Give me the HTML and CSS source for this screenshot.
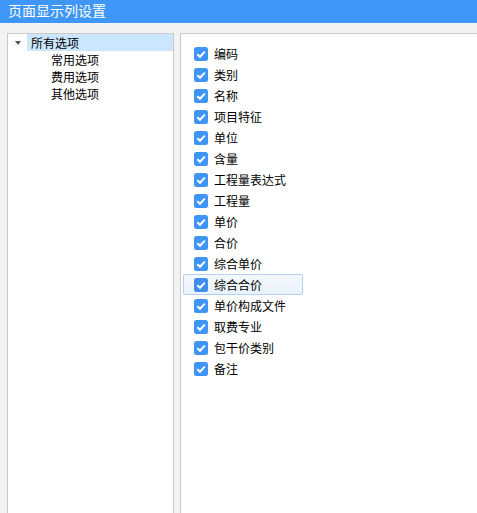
FILE: index.html
```html
<!DOCTYPE html>
<html lang="zh">
<head>
<meta charset="utf-8">
<title>页面显示列设置</title>
<link rel="stylesheet" href="styles.css">
</head>
<body>
<div class="titlebar">页面显示列设置</div>
<div class="content">
  <div class="tree">
    <div class="node root selected"><span class="caret"></span><span class="label">所有选项</span></div>
    <div class="node child"><span class="label">常用选项</span></div>
    <div class="node child"><span class="label">费用选项</span></div>
    <div class="node child"><span class="label">其他选项</span></div>
  </div>
  <div class="list">
    <div class="row"><span class="cb"><svg viewBox="0 0 14 14" width="14" height="14"><rect width="14" height="14" rx="2.5" fill="#3f95f5"/><polyline points="3.3,7.3 6,9.8 10.8,4.6" fill="none" stroke="#fff" stroke-width="2"/></svg></span>编码</div>
    <div class="row"><span class="cb"><svg viewBox="0 0 14 14" width="14" height="14"><rect width="14" height="14" rx="2.5" fill="#3f95f5"/><polyline points="3.3,7.3 6,9.8 10.8,4.6" fill="none" stroke="#fff" stroke-width="2"/></svg></span>类别</div>
    <div class="row"><span class="cb"><svg viewBox="0 0 14 14" width="14" height="14"><rect width="14" height="14" rx="2.5" fill="#3f95f5"/><polyline points="3.3,7.3 6,9.8 10.8,4.6" fill="none" stroke="#fff" stroke-width="2"/></svg></span>名称</div>
    <div class="row"><span class="cb"><svg viewBox="0 0 14 14" width="14" height="14"><rect width="14" height="14" rx="2.5" fill="#3f95f5"/><polyline points="3.3,7.3 6,9.8 10.8,4.6" fill="none" stroke="#fff" stroke-width="2"/></svg></span>项目特征</div>
    <div class="row"><span class="cb"><svg viewBox="0 0 14 14" width="14" height="14"><rect width="14" height="14" rx="2.5" fill="#3f95f5"/><polyline points="3.3,7.3 6,9.8 10.8,4.6" fill="none" stroke="#fff" stroke-width="2"/></svg></span>单位</div>
    <div class="row"><span class="cb"><svg viewBox="0 0 14 14" width="14" height="14"><rect width="14" height="14" rx="2.5" fill="#3f95f5"/><polyline points="3.3,7.3 6,9.8 10.8,4.6" fill="none" stroke="#fff" stroke-width="2"/></svg></span>含量</div>
    <div class="row"><span class="cb"><svg viewBox="0 0 14 14" width="14" height="14"><rect width="14" height="14" rx="2.5" fill="#3f95f5"/><polyline points="3.3,7.3 6,9.8 10.8,4.6" fill="none" stroke="#fff" stroke-width="2"/></svg></span>工程量表达式</div>
    <div class="row"><span class="cb"><svg viewBox="0 0 14 14" width="14" height="14"><rect width="14" height="14" rx="2.5" fill="#3f95f5"/><polyline points="3.3,7.3 6,9.8 10.8,4.6" fill="none" stroke="#fff" stroke-width="2"/></svg></span>工程量</div>
    <div class="row"><span class="cb"><svg viewBox="0 0 14 14" width="14" height="14"><rect width="14" height="14" rx="2.5" fill="#3f95f5"/><polyline points="3.3,7.3 6,9.8 10.8,4.6" fill="none" stroke="#fff" stroke-width="2"/></svg></span>单价</div>
    <div class="row"><span class="cb"><svg viewBox="0 0 14 14" width="14" height="14"><rect width="14" height="14" rx="2.5" fill="#3f95f5"/><polyline points="3.3,7.3 6,9.8 10.8,4.6" fill="none" stroke="#fff" stroke-width="2"/></svg></span>合价</div>
    <div class="row"><span class="cb"><svg viewBox="0 0 14 14" width="14" height="14"><rect width="14" height="14" rx="2.5" fill="#3f95f5"/><polyline points="3.3,7.3 6,9.8 10.8,4.6" fill="none" stroke="#fff" stroke-width="2"/></svg></span>综合单价</div>
    <div class="row hover"><span class="cb"><svg viewBox="0 0 14 14" width="14" height="14"><rect width="14" height="14" rx="2.5" fill="#3f8ef0"/><polyline points="3.3,7.3 6,9.8 10.8,4.6" fill="none" stroke="#fff" stroke-width="2"/></svg></span>综合合价</div>
    <div class="row"><span class="cb"><svg viewBox="0 0 14 14" width="14" height="14"><rect width="14" height="14" rx="2.5" fill="#3f95f5"/><polyline points="3.3,7.3 6,9.8 10.8,4.6" fill="none" stroke="#fff" stroke-width="2"/></svg></span>单价构成文件</div>
    <div class="row"><span class="cb"><svg viewBox="0 0 14 14" width="14" height="14"><rect width="14" height="14" rx="2.5" fill="#3f95f5"/><polyline points="3.3,7.3 6,9.8 10.8,4.6" fill="none" stroke="#fff" stroke-width="2"/></svg></span>取费专业</div>
    <div class="row"><span class="cb"><svg viewBox="0 0 14 14" width="14" height="14"><rect width="14" height="14" rx="2.5" fill="#3f95f5"/><polyline points="3.3,7.3 6,9.8 10.8,4.6" fill="none" stroke="#fff" stroke-width="2"/></svg></span>包干价类别</div>
    <div class="row"><span class="cb"><svg viewBox="0 0 14 14" width="14" height="14"><rect width="14" height="14" rx="2.5" fill="#3f95f5"/><polyline points="3.3,7.3 6,9.8 10.8,4.6" fill="none" stroke="#fff" stroke-width="2"/></svg></span>备注</div>
  </div>
</div>
</body>
</html>
```

FILE: styles.css
```css
html, body {
  margin: 0;
  padding: 0;
  height: 100%;
  overflow: hidden;
}
body {
  background: #f3f3f3;
  font-family: "Noto Sans CJK SC", "Microsoft YaHei", sans-serif;
  font-size: 12px;
  color: #000;
  display: flex;
  flex-direction: column;
}
.titlebar {
  height: 23px;
  line-height: 21px;
  background: #3e96f7;
  color: #fff;
  font-size: 14px;
  padding-left: 8px;
  flex: none;
}
.content {
  flex: 1;
  display: flex;
  padding: 10px 0 0 7px;
  gap: 6px;
  min-height: 0;
}
.tree {
  width: 165px;
  flex: none;
  background: #fff;
  border: 1px solid #c9c9c9;
  border-bottom: none;
}
.node {
  height: 17px;
  line-height: 17px;
  display: flex;
  align-items: center;
}
.root {
  padding-left: 7px;
}
.caret {
  width: 0;
  height: 0;
  border-left: 3.5px solid transparent;
  border-right: 3.5px solid transparent;
  border-top: 4px solid #555;
  margin-right: 6px;
}
.root .label {
  flex: 1;
  padding-left: 4px;
  height: 17px;
}
.selected .label {
  background: #cce6ff;
}
.child {
  padding-left: 43px;
}
.list {
  flex: 1;
  margin-right: -10px;
  background: #fff;
  border: 1px solid #c9c9c9;
  border-bottom: none;
  border-right: none;
  padding-top: 9px;
}
.row {
  width: 108px;
  height: 19px;
  margin-left: 2px;
  margin-bottom: 0;
  padding-left: 10px;
  border: 1px solid transparent;
  border-radius: 2px;
  display: flex;
  align-items: center;
  line-height: 19px;
}
.row.hover {
  background: linear-gradient(#f5f9fe, #e9f2fc);
  border-color: #b4d2f2;
}
.cb {
  width: 14px;
  height: 14px;
  margin-right: 6px;
  display: flex;
}
.cb svg {
  display: block;
}
```
